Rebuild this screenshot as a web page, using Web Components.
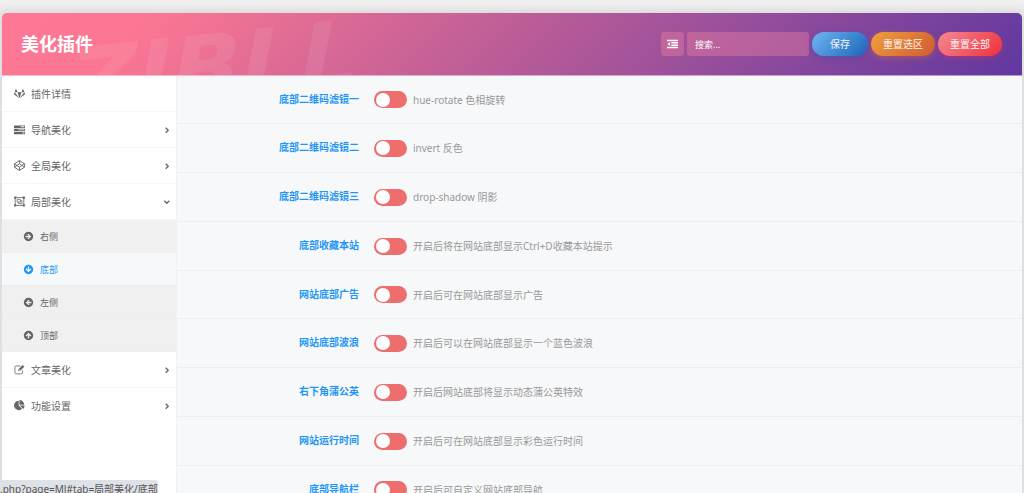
<!DOCTYPE html>
<html lang="zh-CN">
<head>
<meta charset="utf-8">
<title>美化插件</title>
<style>
html{height:100%;overflow:hidden;background:#efefef}
body{margin:0;height:100%;overflow:hidden;font-family:"Noto Sans","Noto Sans CJK SC",sans-serif;font-size:10px;color:#555}
</style>
</head>
<body>
<script>
const ICONS = {
  gitlab: '<path d="M105 875 896 1888 29 1260q-35-26-22-68zM579 875h634L896 1850zM313 303l266 572H105zM1687 875l96 317q13 42-22 68l-867 628zM1687 875h-474l266-572z" transform="translate(0 -200)"/>',
  tasks: '<path d="M0 256h1792v384H0zm1100 120v144h572V376zM0 768h1792v384H0zm700 120v144h972V888zM0 1280h1792v384H0zm1400 120v144h272v-144z" fill-rule="evenodd"/>',
  codepen: '<path d="M896 90 1700 600V1190L896 1702 92 1190V600ZM896 90V600M896 1190V1702M92 600 896 1190 1700 600M92 1190 896 600 1700 1190" fill="none" stroke="currentColor" stroke-width="150" stroke-linejoin="round"/>',
  group: '<path d="M200 250H1592V1542H200Z" fill="none" stroke="currentColor" stroke-width="130"/><path d="M20 70H380V430H20zM1412 70h360v360h-360zM20 1362h360v360H20zM1412 1362h360v360h-360z"/><path d="M520 540h520v460H520zM1040 760h260v500H760v-260" fill="none" stroke="currentColor" stroke-width="130"/>',
  edit: '<path d="M1400 1050v370q0 180-180 180H330q-180 0-180-180V500q0-180 180-180h760" fill="none" stroke="currentColor" stroke-width="130"/><path d="M1410 180 1680 450 970 1160H700V890zM820 930v110h100l60-60-100-110z" fill-rule="evenodd"/>',
  pie: '<path d="M768 890 1314 1436A768 768 0 1 1 768 122zM955 900H1728Q1728 1217 1504 1446zM890 770V0Q1210 0 1435 225T1660 770z"/>',
  dedent: '<path d="M0 128h1792v240H0zM704 500h1088v240H704zM704 880h1088v240H704zM0 1260h1792v240H0zM512 480v670L60 815z"/>',
  arrow: '<path d="M896 128a768 768 0 1 0 0 1536 768 768 0 0 0 0-1536zm-20 300 468 468-468 468-150-150 212-212H420V790h518L726 578z" fill-rule="evenodd"/>',
  chevron: '<path d="M660 480 1110 930 660 1380" fill="none" stroke="currentColor" stroke-width="240"/>'
};

class UiIcon extends HTMLElement {
  connectedCallback() {
    const root = this.attachShadow({mode: 'open'});
    const turn = this.getAttribute('turn') || 0;
    root.innerHTML = `<style>
      :host{display:inline-flex;flex:none;width:11px;height:11px}
      svg{width:100%;height:100%;fill:currentColor;overflow:visible;transform:rotate(${turn}deg)}
    </style><svg viewBox="0 0 1792 1792" aria-hidden="true">${ICONS[this.getAttribute('name')]}</svg>`;
  }
}

class PillButton extends HTMLElement {
  connectedCallback() {
    this.attachShadow({mode: 'open'}).innerHTML = `<style>
      :host{display:block}
      button{display:block;height:24px;min-width:56px;padding:0 12px;border:0;border-radius:12px;color:#f6f6fa;font:inherit;line-height:24px;white-space:nowrap;
        background:linear-gradient(135deg,#6fb6f2,#1a65b8);box-shadow:0 2px 6px rgba(40,80,180,.4)}
      :host([tone=orange]) button{background:linear-gradient(135deg,#f0a03c,#d05a30);box-shadow:0 2px 6px rgba(220,110,60,.4)}
      :host([tone=red]) button{background:linear-gradient(135deg,#f48a92,#ee2f3c);box-shadow:0 2px 6px rgba(220,50,90,.4)}
    </style><button type="button"><slot></slot></button>`;
  }
}

class PluginHeader extends HTMLElement {
  connectedCallback() {
    this.attachShadow({mode: 'open'}).innerHTML = `<style>
      :host{display:flex;position:relative;overflow:hidden;box-sizing:border-box;height:63px;flex:none;align-items:center;justify-content:space-between;padding:0 20px 0 19px;
        border-bottom:1px solid rgba(255,255,255,.5);border-radius:5px 5px 0 0;color:#fff;
        background:linear-gradient(135deg,#fc7895 0,#fa7692 15%,#6038a0 100%) border-box}
      h1{margin:0;font-size:18px;line-height:24px;font-weight:700;position:relative}
      .mark{position:absolute;left:68px;top:10px;font:italic 700 92px/92px "DejaVu Sans",sans-serif;color:rgba(255,255,255,.08);transform:skewY(-6deg)}
      .tools{display:flex;align-items:center;gap:3px;position:relative}
      .toggle{display:flex;align-items:center;justify-content:center;width:23px;height:24px;padding:0;border:0;border-radius:3px;color:#fff;background:rgba(240,130,160,.4)}
      input{box-sizing:border-box;width:122px;height:24px;padding:0 8px;border:0;border-radius:3px;color:#fff;background:rgba(240,130,160,.4);font:inherit;font-size:9px}
      input::placeholder{color:#fff;opacity:1}
    </style>
    <div class="mark" aria-hidden="true">ZIBLL</div>
    <h1>美化插件</h1>
    <div class="tools">
      <button class="toggle" type="button" aria-label="展开全部"><ui-icon name="dedent"></ui-icon></button>
      <input type="search" aria-label="搜索" placeholder="搜索...">
      <pill-button>保存</pill-button>
      <pill-button tone="orange">重置选区</pill-button>
      <pill-button tone="red">重置全部</pill-button>
    </div>`;
  }
}

class NavItem extends HTMLElement {
  connectedCallback() {
    const more = this.getAttribute('more');
    this.attachShadow({mode: 'open'}).innerHTML = `<style>
      :host{display:block}
      a{display:flex;align-items:center;box-sizing:border-box;height:36px;padding:0 4px 0 12px;gap:6px;border-bottom:1px solid var(--line,#f6f6f6);color:#666;text-decoration:none}
      span{flex:1}
      .more{width:10px;height:10px}
      :host([sub]) a{height:33px;padding-left:21px;border-color:#eee;background:#f0f0f0;font-size:9px}
      :host([active]) a{background:#f5f9fa;color:#1e96f5}
    </style><a href="#tab"><ui-icon name="${this.getAttribute('icon')}" turn="${this.getAttribute('turn') || 0}"></ui-icon><span><slot></slot></span>
    ${more ? `<ui-icon class="more" name="chevron" turn="${more === 'open' ? 90 : 0}"></ui-icon>` : ''}</a>`;
  }
}

class SideNav extends HTMLElement {
  connectedCallback() {
    this.attachShadow({mode: 'open'}).innerHTML = `<style>
      :host{display:block;background:#fff;border-right:1px solid #f0f1f2}
      nav-item:last-child{--line:transparent}
    </style><nav>
      <nav-item icon="gitlab">插件详情</nav-item>
      <nav-item icon="tasks" more="closed">导航美化</nav-item>
      <nav-item icon="codepen" more="closed">全局美化</nav-item>
      <nav-item icon="group" more="open">局部美化</nav-item>
      <nav-item sub icon="arrow">右侧</nav-item>
      <nav-item sub active icon="arrow" turn="90">底部</nav-item>
      <nav-item sub icon="arrow" turn="180">左侧</nav-item>
      <nav-item sub icon="arrow" turn="270">顶部</nav-item>
      <nav-item icon="edit" more="closed">文章美化</nav-item>
      <nav-item icon="pie" more="closed">功能设置</nav-item>
    </nav>`;
  }
}

class SwitchField extends HTMLElement {
  connectedCallback() {
    this.attachShadow({mode: 'open'}).innerHTML = `<style>
      :host{display:grid;grid-template-columns:197px 33px 1fr;align-items:center;box-sizing:border-box;border-bottom:1px solid #eceeef}
      label{text-align:right;margin-right:15px;color:#1e96f5;font-weight:700;line-height:16px;padding-bottom:2px}
      input{appearance:none;margin:0;width:33px;height:17px;border-radius:9px;background:#ee6e6e;display:flex;align-items:center;padding:0 2px;box-sizing:border-box}
      input::before{content:"";width:14px;height:14px;border-radius:50%;background:#fff}
      input:checked{background:#4fb56a;justify-content:flex-end}
      p{margin:0 0 0 6px;color:#999;line-height:16px}
    </style><label for="s">${this.getAttribute('label')}</label><input id="s" type="checkbox" role="switch"><p><slot></slot></p>`;
  }
}

class PluginPage extends HTMLElement {
  connectedCallback() {
    this.attachShadow({mode: 'open'}).innerHTML = `<style>
      :host{display:flex;flex-direction:column;box-sizing:border-box;height:100%;padding:13px 2px 0;background:linear-gradient(#f0f0f0,#e8e8e8 13px)}
      .card{display:flex;flex-direction:column;flex:1;min-height:0;border-radius:5px 5px 0 0;box-shadow:0 0 10px rgba(0,0,0,.1)}
      .body{display:grid;grid-template-columns:175px 1fr;flex:1;min-height:0}
      main{display:grid;grid-auto-rows:48px 49px 49px 49px;background:#f6f8f9;overflow:hidden}
      .status{position:absolute;left:0;bottom:0;height:13px;overflow:hidden;border-radius:0 3px 0 0;background:#dee1e6;color:#555;line-height:18px}
    </style>
    <div class="card">
      <plugin-header></plugin-header>
      <div class="body">
        <side-nav></side-nav>
        <main>
          <switch-field label="底部二维码滤镜一">hue-rotate 色相旋转</switch-field>
          <switch-field label="底部二维码滤镜二">invert 反色</switch-field>
          <switch-field label="底部二维码滤镜三">drop-shadow 阴影</switch-field>
          <switch-field label="底部收藏本站">开启后将在网站底部显示Ctrl+D收藏本站提示</switch-field>
          <switch-field label="网站底部广告">开启后可在网站底部显示广告</switch-field>
          <switch-field label="网站底部波浪">开启后可以在网站底部显示一个蓝色波浪</switch-field>
          <switch-field label="右下角蒲公英">开启后网站底部将显示动态蒲公英特效</switch-field>
          <switch-field label="网站运行时间">开启后可在网站底部显示彩色运行时间</switch-field>
          <switch-field label="底部导航栏">开启后可自定义网站底部导航</switch-field>
        </main>
      </div>
    </div>
    <div class="status">.php?page=MJ#tab=局部美化/底部</div>`;
  }
}

customElements.define('ui-icon', UiIcon);
customElements.define('pill-button', PillButton);
customElements.define('plugin-header', PluginHeader);
customElements.define('nav-item', NavItem);
customElements.define('side-nav', SideNav);
customElements.define('switch-field', SwitchField);
customElements.define('plugin-page', PluginPage);
</script>
<plugin-page></plugin-page>
</body>
</html>
